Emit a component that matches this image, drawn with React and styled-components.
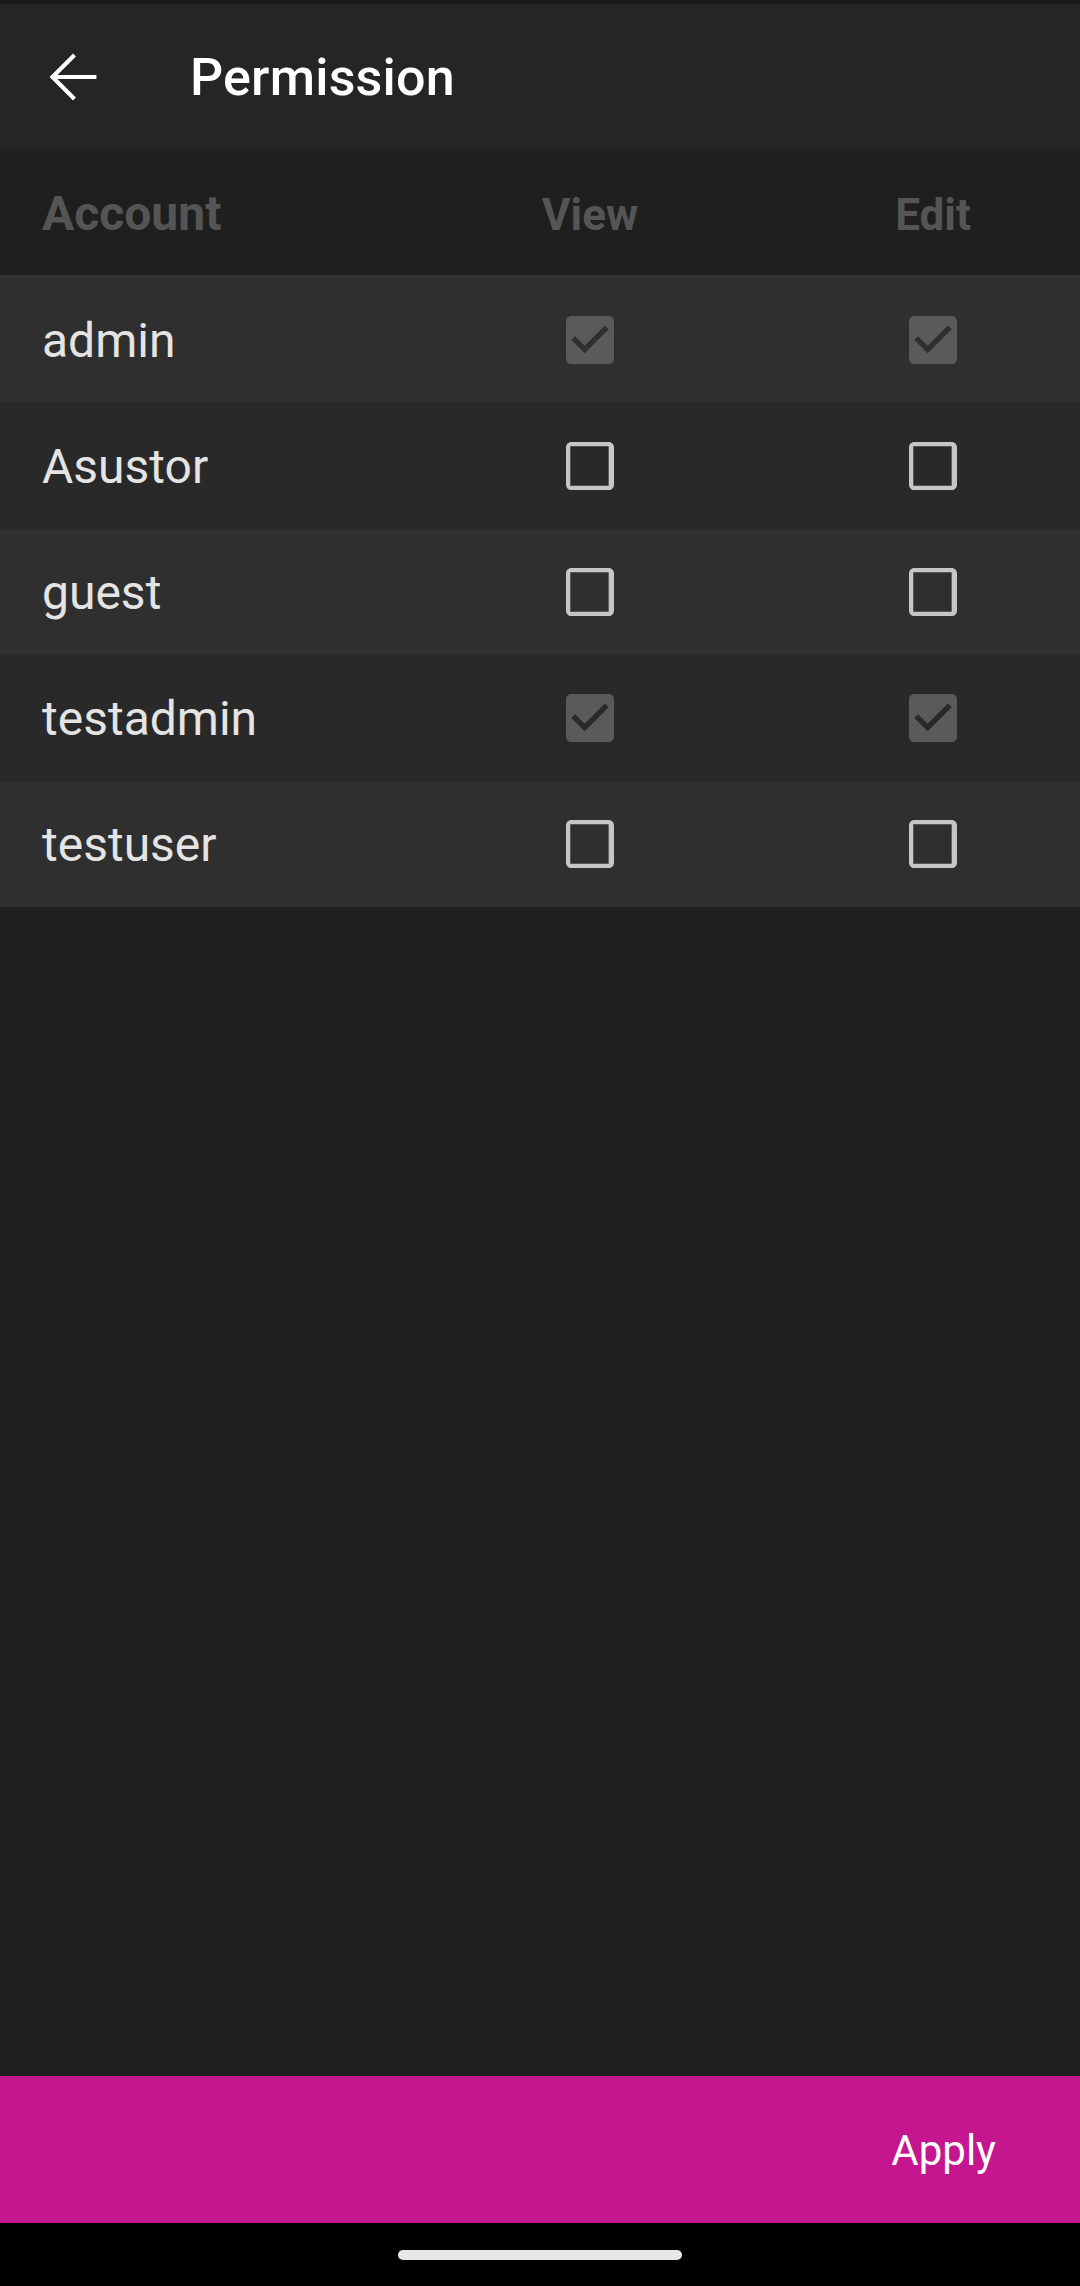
import React from "react";
import styled, { createGlobalStyle } from "styled-components";

const GlobalStyle = createGlobalStyle`
  html, body {
    margin: 0;
    padding: 0;
    background: #202020;
  }
  * {
    box-sizing: border-box;
  }
`;

const Screen = styled.div`
  width: 1080px;
  height: 2286px;
  display: flex;
  flex-direction: column;
  background: #202020;
  font-family: Roboto, "Noto Sans", sans-serif;
  overflow: hidden;
`;

const StatusStrip = styled.div`
  height: 4px;
  flex-shrink: 0;
  background: #1c1a18;
`;

const Toolbar = styled.header`
  height: 146px;
  flex-shrink: 0;
  display: flex;
  align-items: center;
  padding-left: 41px;
  gap: 85px;
  background: #252525;
`;

const BackButton = styled.button`
  all: unset;
  display: flex;
  width: 64px;
  height: 64px;
  cursor: pointer;
`;

const Title = styled.h1`
  margin: 0;
  font-size: 52px;
  font-weight: 500;
  color: #ffffff;
  letter-spacing: 0.2px;
`;

const Row = styled.div`
  height: ${(p) => (p.head ? "127px" : "126px")};
  flex-shrink: 0;
  display: grid;
  grid-template-columns: 1fr 120px 120px;
  column-gap: 223px;
  align-items: center;
  padding: 0 87px 0 42px;
  background: ${(p) => (p.head ? "#1f1f1f" : p.odd ? "#2f2f2f" : "#292929")};
  border-bottom: ${(p) => (p.head ? "2px solid #363636" : "none")};
`;

const HeadCell = styled.div`
  font-size: ${(p) => (p.center ? "44px" : "48px")};
  font-weight: 700;
  color: #555555;
  text-align: ${(p) => (p.center ? "center" : "left")};
  padding-top: ${(p) => (p.center ? "4px" : "2px")};
`;

const Name = styled.div`
  font-size: 48px;
  color: #e4e4e4;
`;

const Cell = styled.div`
  display: flex;
  justify-content: center;
`;

const Filler = styled.div`
  flex: 1;
`;

const ApplyBar = styled.div`
  height: 147px;
  flex-shrink: 0;
  display: flex;
  align-items: center;
  justify-content: flex-end;
  padding-right: 84px;
  background: #c4168f;
`;

const ApplyButton = styled.button`
  all: unset;
  cursor: pointer;
  font-size: 42px;
  color: #ffffff;
  padding-top: 2px;
`;

const NavBar = styled.div`
  height: 63px;
  flex-shrink: 0;
  display: flex;
  justify-content: center;
  padding-top: 27px;
  background: #000000;
`;

const HomePill = styled.div`
  width: 284px;
  height: 10px;
  border-radius: 5px;
  background: #e8e8e8;
`;

const ArrowBack = () => (
  <svg width="64" height="64" viewBox="0 0 24 24" fill="none">
    <path
      d="M20 12H4.6M12 4.3 4.3 12l7.7 7.7"
      stroke="#ffffff"
      strokeWidth="1.55"
      strokeLinecap="square"
    />
  </svg>
);

const CheckBox = ({ checked }) =>
  checked ? (
    <svg width="64" height="64" viewBox="0 0 24 24">
      <path
        fillRule="evenodd"
        fill="#5a5a5a"
        d="M19 3H5c-1.11 0-2 .9-2 2v14c0 1.1.89 2 2 2h14c1.11 0 2-.9 2-2V5c0-1.1-.89-2-2-2zm-9 14l-5-5 1.41-1.41L10 14.17l7.59-7.59L19 8l-9 9z"
      />
    </svg>
  ) : (
    <svg width="64" height="64" viewBox="0 0 24 24">
      <path
        fill="#c6c6c6"
        d="M19 4.6v14.8H4.6V4.6h14.4m0-1.6H5c-1.1 0-2 .9-2 2v14c0 1.1.9 2 2 2h14c1.1 0 2-.9 2-2V5c0-1.1-.9-2-2-2z"
      />
    </svg>
  );

const accounts = [
  { name: "admin", view: true, edit: true },
  { name: "Asustor", view: false, edit: false },
  { name: "guest", view: false, edit: false },
  { name: "testadmin", view: true, edit: true },
  { name: "testuser", view: false, edit: false },
];

export default function App() {
  return (
    <Screen>
      <GlobalStyle />
      <StatusStrip />
      <Toolbar>
        <BackButton aria-label="Back">
          <ArrowBack />
        </BackButton>
        <Title>Permission</Title>
      </Toolbar>
      <Row head>
        <HeadCell>Account</HeadCell>
        <HeadCell center>View</HeadCell>
        <HeadCell center>Edit</HeadCell>
      </Row>
      {accounts.map((a, i) => (
        <Row key={a.name} odd={i % 2 === 0}>
          <Name>{a.name}</Name>
          <Cell>
            <CheckBox checked={a.view} />
          </Cell>
          <Cell>
            <CheckBox checked={a.edit} />
          </Cell>
        </Row>
      ))}
      <Filler />
      <ApplyBar>
        <ApplyButton>Apply</ApplyButton>
      </ApplyBar>
      <NavBar>
        <HomePill />
      </NavBar>
    </Screen>
  );
}
